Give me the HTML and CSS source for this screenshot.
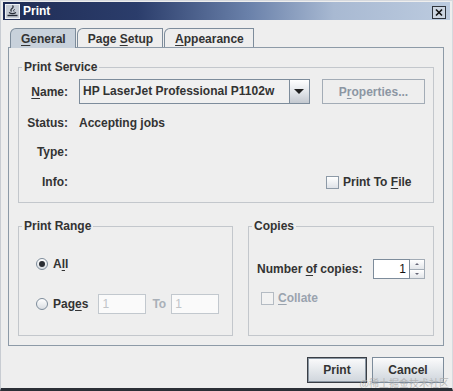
FILE: index.html
```html
<!DOCTYPE html>
<html lang="en">
<head>
  <meta charset="UTF-8">
  <title>Print</title>
  <link rel="stylesheet" href="styles.css">
</head>
<body>
  <div class="window">
    <div class="titlebar">
      <svg class="app-icon" width="15" height="15" viewBox="0 0 15 15">
        <rect x="0.5" y="0.5" width="14" height="14" fill="#c6ccd6" stroke="#eef1f5"/>
        <path d="M2.5 11.5h10" stroke="#262b36" stroke-width="1.4"/>
        <path d="M4 8.5q3.5 2.2 7 0" fill="none" stroke="#262b36" stroke-width="1.2"/>
        <path d="M6.5 7.5q-1.5-1.5 0.5-3q2-1.5 0.5-3" fill="none" stroke="#262b36" stroke-width="1.2"/>
        <path d="M9 7.5q-1-1 0.5-2.2" fill="none" stroke="#262b36" stroke-width="1"/>
      </svg>
      <span class="title">Print</span>
      <span class="close">
        <svg width="14" height="13" viewBox="0 0 14 13">
          <rect x="0.5" y="0.5" width="13" height="12" fill="#cdd6e2" stroke="#2e333b"/>
          <path d="M4 3.5l6 6M10 3.5l-6 6" stroke="#111" stroke-width="1.6"/>
        </svg>
      </span>
    </div>

    <div class="tabs">
      <div class="tab selected"><u>G</u>eneral</div>
      <div class="tab">Page <u>S</u>etup</div>
      <div class="tab"><u>A</u>ppearance</div>
    </div>

    <div class="panel">
      <fieldset class="group">
        <legend>Print Service</legend>
        <div class="service-grid">
          <span class="field-label"><u>N</u>ame:</span>
          <div class="combo">
            <span class="combo-text">HP LaserJet Professional P1102w</span>
            <span class="combo-arrow"></span>
          </div>
          <button class="btn btn-disabled">P<u>r</u>operties...</button>

          <span class="field-label">Status:</span>
          <span class="value wide">Accepting jobs</span>

          <span class="field-label">Type:</span>
          <span class="value wide"></span>

          <span class="field-label">Info:</span>
          <span></span>
          <span class="check file-check"><span class="box"></span><span>Print To <u>F</u>ile</span></span>
        </div>
      </fieldset>

      <div class="lower">
        <fieldset class="group">
          <legend>Print Range</legend>
          <div class="range-body">
            <div class="range-row">
              <span class="radio checked"></span><span>A<u>l</u>l</span>
            </div>
            <div class="range-row">
              <span class="radio"></span><span>Pag<u>e</u>s</span>
              <span class="page-field">1</span>
              <span class="to-label">To</span>
              <span class="page-field">1</span>
            </div>
          </div>
        </fieldset>

        <fieldset class="group">
          <legend>Copies</legend>
          <div class="copies-body">
            <div class="copies-row">
              <span>Number <u>o</u>f copies:</span>
              <div class="spinner">
                <span class="spin-field">1</span>
                <span class="spin-buttons">
                  <span class="spin-btn up"></span>
                  <span class="spin-btn down"></span>
                </span>
              </div>
            </div>
            <div class="collate-row">
              <span class="check disabled"><span class="box"></span><span><u>C</u>ollate</span></span>
            </div>
          </div>
        </fieldset>
      </div>
    </div>

    <div class="actions">
      <button class="btn btn-default">Print</button>
      <button class="btn btn-cancel">Cancel</button>
    </div>

    <span class="watermark">@稀土掘金技术社区</span>
  </div>
</body>
</html>
```

FILE: styles.css
```css
body {
  margin: 0;
  font-family: "Liberation Sans", Arial, sans-serif;
  font-size: 12px;
  font-weight: bold;
  color: #333;
  background-color: #eeeeee;
}
u {
  text-decoration-thickness: 1px;
  text-underline-offset: 2px;
}
.window {
  position: relative;
  width: 453px;
  height: 391px;
  box-sizing: border-box;
  background-color: #eeeeee;
  border: 1px solid #d6d9de;
  border-left-color: #c8ccd2;
  border-bottom: 3px solid #2b2f36;
  padding: 1px 2px 0;
  overflow: hidden;
}
.titlebar {
  height: 18px;
  display: flex;
  align-items: center;
  padding: 0 4px 0 2px;
  background: linear-gradient(to right, #1f2c55 0%, #2b3d6b 30%, #6a81aa 55%, #a8b9d2 74%, #bccbdf 100%);
}
.app-icon {
  display: block;
}
.title {
  margin-left: 3px;
  color: #fff;
  font-size: 12px;
}
.close {
  margin-left: auto;
  margin-top: 2px;
  height: 13px;
}
.close svg {
  display: block;
}
.tabs {
  display: flex;
  align-items: flex-end;
  height: 19px;
  margin: 8px 0 0 7px;
}
.tab {
  height: 19px;
  box-sizing: border-box;
  border: 1px solid #7d8c9b;
  border-bottom: none;
  border-top-left-radius: 6px;
  padding: 0 9px 0 10px;
  line-height: 20px;
  margin-right: 1px;
  background-color: #eeeeee;
}
.tab.selected {
  position: relative;
  z-index: 1;
  height: 20px;
  margin-bottom: -1px;
  background-color: #c8d1db;
}
.panel {
  height: 299px;
  box-sizing: border-box;
  margin: 0 6px 0 5px;
  border: 1px solid #8d9aa7;
  padding: 12px 9px 9px;
}
.group {
  margin: 0;
  padding: 0;
  min-width: 0;
  border: 1px solid #c3c7cc;
}
.group legend {
  margin-left: 3px;
  padding: 0 2px;
  line-height: 14px;
}
.service-grid {
  display: grid;
  grid-template-columns: 49px 232px 103px;
  grid-template-rows: 25px 38px 20px 40px;
  column-gap: 11px;
  align-items: center;
  padding-top: 5px;
}
.field-label {
  text-align: right;
}
.value.wide {
  grid-column: span 2;
}
.combo {
  display: flex;
  width: 231px;
  height: 25px;
  box-sizing: border-box;
  border: 1px solid #7d8c9b;
  background-color: #f0f0f0;
}
.combo-text {
  flex: 1;
  padding-left: 3px;
  line-height: 23px;
  white-space: nowrap;
}
.combo-arrow {
  position: relative;
  width: 19px;
  border-left: 1px solid #7d8c9b;
  background: linear-gradient(#ffffff, #e4e7eb 50%, #c4c9d0);
}
.combo-arrow::after {
  content: "";
  position: absolute;
  left: 4px;
  top: 9px;
  border-left: 5px solid transparent;
  border-right: 5px solid transparent;
  border-top: 5px solid #222;
}
.btn {
  font-family: inherit;
  font-size: 12px;
  font-weight: bold;
  color: #333;
  border: 1px solid #7d8c9b;
  border-radius: 0;
  padding: 0;
  height: 26px;
  background: linear-gradient(#fbfbfc, #e2e6ea 55%, #cfd5dc);
}
.btn-disabled {
  height: 25px;
  width: 103px;
  color: #8c96a3;
  border-color: #a3acb6;
  background: #eeeeee;
}
.check {
  display: flex;
  align-items: center;
}
.check .box {
  width: 13px;
  height: 13px;
  box-sizing: border-box;
  border: 1px solid #8d9aa7;
  background: linear-gradient(#ffffff, #dfe3e8);
  margin-right: 4px;
}
.file-check {
  padding-left: 4px;
}
.check.disabled {
  color: #9aa3ae;
}
.check.disabled .box {
  border-color: #b4bbc3;
  background: #f2f2f2;
}
.lower {
  display: grid;
  grid-template-columns: 215px 186px;
  column-gap: 15px;
  margin-top: 16px;
}
.range-body {
  display: flex;
  flex-direction: column;
  gap: 20px;
  padding: 21px 0 21px 17px;
}
.range-row {
  display: flex;
  align-items: center;
  height: 20px;
}
.radio {
  position: relative;
  width: 12px;
  height: 12px;
  box-sizing: border-box;
  border: 1px solid #7d8c9b;
  border-radius: 50%;
  background: linear-gradient(#ffffff, #d9dde2);
  margin-right: 5px;
}
.radio.checked::after {
  content: "";
  position: absolute;
  left: 2px;
  top: 2px;
  width: 6px;
  height: 6px;
  border-radius: 50%;
  background-color: #2a2d33;
}
.page-field {
  width: 48px;
  height: 20px;
  box-sizing: border-box;
  border: 1px solid #c2c8ce;
  background-color: #fafafa;
  color: #c0c4c8;
  font-weight: normal;
  padding-left: 3px;
  line-height: 18px;
  margin-left: 10px;
}
.to-label {
  color: #a9b0b8;
  margin-left: 6px;
}
.to-label + .page-field {
  margin-left: 5px;
}
.copies-body {
  padding: 26px 8px 0 8px;
}
.copies-row {
  display: flex;
  justify-content: space-between;
  align-items: center;
  height: 20px;
}
.spinner {
  display: flex;
  height: 20px;
}
.spin-field {
  width: 37px;
  box-sizing: border-box;
  border: 1px solid #7d8c9b;
  background-color: #fff;
  text-align: right;
  padding-right: 3px;
  line-height: 18px;
  font-weight: normal;
  color: #111;
}
.spin-buttons {
  display: flex;
  flex-direction: column;
  width: 15px;
}
.spin-btn {
  position: relative;
  flex: 1;
  border: 1px solid #a3acb6;
  border-left: none;
  background: linear-gradient(#ffffff, #e3e6ea);
}
.spin-btn.down {
  border-top: none;
}
.spin-btn::after {
  content: "";
  position: absolute;
  left: 5px;
  top: 3px;
  border-left: 2px solid transparent;
  border-right: 2px solid transparent;
}
.spin-btn.up::after {
  border-bottom: 2px solid #667;
}
.spin-btn.down::after {
  border-top: 2px solid #667;
}
.collate-row {
  margin-top: 10px;
  padding-left: 4px;
  height: 18px;
  display: flex;
  align-items: center;
}
.actions {
  display: flex;
  justify-content: flex-end;
  gap: 5px;
  margin: 11px 6px 0 0;
}
.btn-default {
  width: 60px;
  border-color: #3a3e45;
  box-shadow: inset 0 0 0 1px #8a96a2;
}
.btn-cancel {
  width: 72px;
}
.watermark {
  position: absolute;
  right: 3px;
  bottom: 0;
  font-family: "Noto Sans CJK SC", sans-serif;
  font-size: 10px;
  line-height: 11px;
  font-weight: normal;
  color: rgba(175, 175, 175, 0.85);
}
```
